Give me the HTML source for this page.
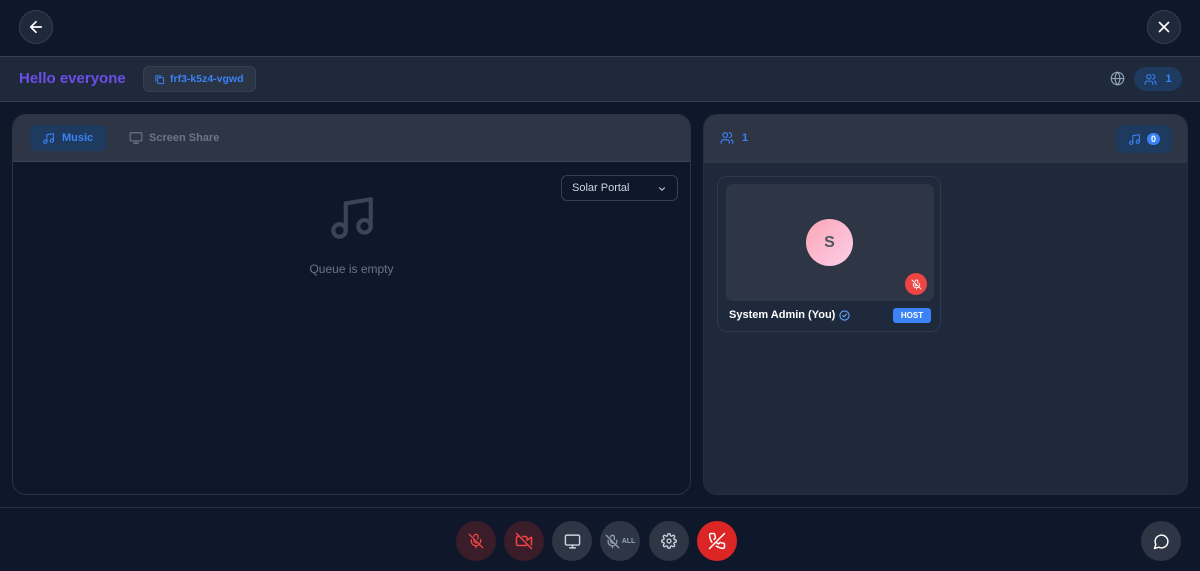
<!DOCTYPE html><html><head><style>
*{box-sizing:border-box;margin:0;padding:0}
body{width:1200px;height:571px;background:#0f172a;font-family:"Liberation Sans",sans-serif;position:relative;overflow:hidden}
.a{position:absolute}
.circ{border-radius:50%;display:flex;align-items:center;justify-content:center}
svg{fill:none;stroke-linecap:round;stroke-linejoin:round}
</style></head><body>
<div class="a circ" style="left:19px;top:10px;width:34px;height:34px;background:#1e293b;border:1px solid #334155"><svg width="18" height="18" viewBox="0 0 24 24" stroke="#fff" stroke-width="2.2"><path d="M19 12H5M12 5l-7 7 7 7"/></svg></div>
<div class="a circ" style="left:1147px;top:10px;width:34px;height:34px;background:#1e293b;border:1px solid #334155"><svg width="18" height="18" viewBox="0 0 24 24" stroke="#fff" stroke-width="2.2"><path d="M6 6l12 12M18 6L6 18"/></svg></div>
<div class="a" style="left:0;top:56px;width:1200px;height:46px;background:#1e293b;border-top:1px solid #334155;border-bottom:1px solid #334155"></div>
<div class="a" style="left:19px;top:70px;font-size:15px;font-weight:bold;color:#6d4ee6">Hello everyone</div>
<div class="a" style="left:143px;top:66px;width:113px;height:26px;background:#2a3444;border:1px solid #334155;border-radius:6px;display:flex;align-items:center;padding-left:10px;gap:5px;font-size:10.5px;font-weight:bold;color:#3b82f6"><svg width="11" height="11" viewBox="0 0 24 24" stroke="#3b82f6" stroke-width="2.2"><rect x="8" y="8" width="13" height="13" rx="2"/><path d="M4 16V5a1 1 0 0 1 1-1h11"/></svg>frf3-k5z4-vgwd</div>
<svg class="a" style="left:1110px;top:71px" width="15" height="15" viewBox="0 0 24 24" stroke="#94a3b8" stroke-width="1.8"><circle cx="12" cy="12" r="10"/><path d="M2 12h20M12 2a15 15 0 0 1 0 20M12 2a15 15 0 0 0 0 20"/></svg>
<div class="a" style="left:1134px;top:67px;width:48px;height:24px;border-radius:12px;background:#1e3a5f;display:flex;align-items:center;justify-content:center;gap:8px;color:#3b82f6;font-size:11px;font-weight:bold"><svg width="13" height="13" viewBox="0 0 24 24" stroke="#3b82f6" stroke-width="2"><circle cx="9" cy="7" r="4"/><path d="M2 21v-2a4 4 0 0 1 4-4h6a4 4 0 0 1 4 4v2M16 3a4 4 0 0 1 0 8M22 21v-2a4 4 0 0 0-3-3.9"/></svg>1</div>

<div class="a" style="left:12px;top:114px;width:679px;height:381px;border:1px solid #2a3546;border-radius:14px;background:#0f172a;overflow:hidden">
<div style="height:47px;background:#2e3646;border-bottom:1px solid #3a4556;position:relative">
<div class="a" style="left:17px;top:10px;width:77px;height:26px;border-radius:7px;background:#1e3a5f;display:flex;align-items:center;padding-left:12px;gap:7px;color:#3b82f6;font-size:11px;font-weight:bold"><svg width="13" height="13" viewBox="0 0 24 24" stroke="#3b82f6" stroke-width="2"><path d="M9 18V5l12-2v13"/><circle cx="6" cy="18" r="3"/><circle cx="18" cy="16" r="3"/></svg>Music</div>
<div class="a" style="left:116px;top:16px;display:flex;align-items:center;gap:6px;color:#6b7585;font-size:11px;font-weight:bold"><svg width="14" height="14" viewBox="0 0 24 24" stroke="#6b7585" stroke-width="2"><rect x="2" y="3" width="20" height="14" rx="2"/><path d="M8 21h8M12 17v4"/></svg>Screen Share</div>
</div>
<div class="a" style="left:548px;top:60px;width:117px;height:26px;border:1px solid #334155;border-radius:6px;color:#cbd5e1;font-size:11px;padding:6px 10px">Solar Portal<svg class="a" style="right:10px;top:8px" width="10" height="10" viewBox="0 0 24 24" stroke="#cbd5e1" stroke-width="2.5"><path d="M6 9l6 6 6-6"/></svg></div>
<svg class="a" style="left:314px;top:78px" width="50" height="50" viewBox="0 0 24 24" stroke="#3a4556" stroke-width="2"><path d="M9 18V5l12-2v13"/><circle cx="6" cy="18" r="3"/><circle cx="18" cy="16" r="3"/></svg>
<div class="a" style="left:0;width:677px;top:147px;text-align:center;font-size:12px;color:#6b7585">Queue is empty</div>
</div>

<div class="a" style="left:703px;top:114px;width:485px;height:381px;border:1px solid #253041;border-radius:14px;background:#1e293b;overflow:hidden">
<div style="height:48px;background:#2e3646;position:relative">
<div class="a" style="left:16px;top:16px;display:flex;gap:8px;align-items:center;color:#3b82f6;font-size:11px;font-weight:bold"><svg width="14" height="14" viewBox="0 0 24 24" stroke="#3b82f6" stroke-width="2"><circle cx="9" cy="7" r="4"/><path d="M2 21v-2a4 4 0 0 1 4-4h6a4 4 0 0 1 4 4v2M16 3a4 4 0 0 1 0 8M22 21v-2a4 4 0 0 0-3-3.9"/></svg>1</div>
<div class="a" style="left:412px;top:10px;width:56px;height:28px;border-radius:7px;background:#1e3a5f;display:flex;align-items:center;justify-content:center;gap:6px"><svg width="13" height="13" viewBox="0 0 24 24" stroke="#3b82f6" stroke-width="2"><path d="M9 18V5l12-2v13"/><circle cx="6" cy="18" r="3"/><circle cx="18" cy="16" r="3"/></svg><span style="background:#3b82f6;color:#fff;font-size:9px;font-weight:bold;border-radius:7px;padding:1px 4px">0</span></div>
</div>
<div class="a" style="left:13px;top:61px;width:224px;height:156px;border:1px solid #2e3a4c;border-radius:10px">
<div class="a" style="left:8px;top:7px;width:208px;height:117px;background:#2e3646;border-radius:7px">
<div class="a circ" style="left:80px;top:35px;width:47px;height:47px;background:linear-gradient(135deg,#fca5b5,#fbcfe8);color:#4b5563;font-weight:bold;font-size:16px">S</div>
<div class="a circ" style="left:179px;top:89px;width:22px;height:22px;background:#ef4444"><svg width="11" height="11" viewBox="0 0 24 24" stroke="#fff" stroke-width="2"><path d="M2 2l20 20M9 9v3a3 3 0 0 0 5 2M15 9V5a3 3 0 0 0-6 0M19 10v2a7 7 0 0 1-1 3M5 10v2a7 7 0 0 0 12 5M12 19v3"/></svg></div>
</div>
<div class="a" style="left:11px;top:132px;color:#fff;font-size:11px;font-weight:bold;display:flex;align-items:center;gap:4px">System Admin (You)<svg width="11" height="11" viewBox="0 0 24 24" stroke="#60a5fa" stroke-width="2.5"><circle cx="12" cy="12" r="10"/><path d="M8 12l3 3 5-6"/></svg></div>
<div class="a" style="left:175px;top:131px;width:38px;height:15px;background:#3b82f6;border-radius:3px;color:#fff;font-size:8px;font-weight:bold;text-align:center;line-height:15px">HOST</div>
</div>
</div>

<div class="a" style="left:0;top:507px;width:1200px;height:1px;background:#253041"></div>
<div class="a circ" style="left:456px;top:521px;width:40px;height:40px;background:#3b1d2a"><svg width="16" height="16" viewBox="0 0 24 24" stroke="#ef4444" stroke-width="2"><path d="M2 2l20 20M9 9v3a3 3 0 0 0 5 2M15 9V5a3 3 0 0 0-6 0M19 10v2a7 7 0 0 1-1 3M5 10v2a7 7 0 0 0 12 5M12 19v3"/></svg></div>
<div class="a circ" style="left:504px;top:521px;width:40px;height:40px;background:#3b1d2a"><svg width="18" height="18" viewBox="0 0 24 24" stroke="#ef4444" stroke-width="2"><path d="M2 2l20 20M10 6h4a2 2 0 0 1 2 2v3l6-4v10M16 16a2 2 0 0 1-2 2H4a2 2 0 0 1-2-2V8a2 2 0 0 1 2-2"/></svg></div>
<div class="a circ" style="left:552px;top:521px;width:40px;height:40px;background:#2e3646"><svg width="17" height="17" viewBox="0 0 24 24" stroke="#cbd5e1" stroke-width="2"><rect x="2" y="3" width="20" height="14" rx="2"/><path d="M8 21h8M12 17v4"/></svg></div>
<div class="a circ" style="left:600px;top:521px;width:40px;height:40px;background:#2e3646;gap:2px"><svg width="15" height="15" viewBox="0 0 24 24" stroke="#94a3b8" stroke-width="2"><path d="M2 2l20 20M9 9v3a3 3 0 0 0 5 2M15 9V5a3 3 0 0 0-6 0M19 10v2a7 7 0 0 1-1 3M5 10v2a7 7 0 0 0 12 5M12 19v3"/></svg><span style="font-size:7px;font-weight:bold;color:#94a3b8">ALL</span></div>
<div class="a circ" style="left:649px;top:521px;width:40px;height:40px;background:#2e3646"><svg width="16" height="16" viewBox="0 0 24 24" stroke="#cbd5e1" stroke-width="2"><circle cx="12" cy="12" r="3"/><path d="M19.4 15a1.7 1.7 0 0 0 .3 1.8l.1.1a2 2 0 1 1-2.8 2.8l-.1-.1a1.7 1.7 0 0 0-1.8-.3 1.7 1.7 0 0 0-1 1.5V21a2 2 0 1 1-4 0v-.1a1.7 1.7 0 0 0-1.100-1.5 1.7 1.7 0 0 0-1.8.3l-.1.1a2 2 0 1 1-2.8-2.8l.1-.1a1.7 1.7 0 0 0 .3-1.8 1.7 1.7 0 0 0-1.5-1H3a2 2 0 1 1 0-4h.1a1.7 1.7 0 0 0 1.5-1.100 1.7 1.7 0 0 0-.3-1.8l-.1-.1a2 2 0 1 1 2.8-2.8l.1.1a1.7 1.7 0 0 0 1.8.3H9a1.7 1.7 0 0 0 1-1.5V3a2 2 0 1 1 4 0v.1a1.7 1.7 0 0 0 1 1.5 1.7 1.7 0 0 0 1.8-.3l.1-.1a2 2 0 1 1 2.8 2.8l-.1.1a1.7 1.7 0 0 0-.3 1.8V9a1.7 1.7 0 0 0 1.5 1H21a2 2 0 1 1 0 4h-.1a1.7 1.7 0 0 0-1.5 1z"/></svg></div>
<div class="a circ" style="left:697px;top:521px;width:40px;height:40px;background:#dc2626"><svg width="18" height="18" viewBox="0 0 24 24" stroke="#fff" stroke-width="2"><path d="M22 2L2 22M10.7 13.3a16 16 0 0 0 3.4 2.6l1.3-1.3a2 2 0 0 1 2.1-.4c.9.3 1.8.6 2.8.7a2 2 0 0 1 1.7 2v3a2 2 0 0 1-2.2 2 20 20 0 0 1-8.6-3.1M5.2 13.7A20 20 0 0 1 2.1 4.2 2 2 0 0 1 4.1 2h3a2 2 0 0 1 2 1.7c.1 1 .4 1.9.7 2.8a2 2 0 0 1-.4 2.1L8.1 9.9"/></svg></div>
<div class="a circ" style="left:1141px;top:521px;width:40px;height:40px;background:#2e3646"><svg width="17" height="17" viewBox="0 0 24 24" stroke="#fff" stroke-width="2"><path d="M7.9 20A9 9 0 1 0 4 16.1L2 22z"/></svg></div>
</body></html>
